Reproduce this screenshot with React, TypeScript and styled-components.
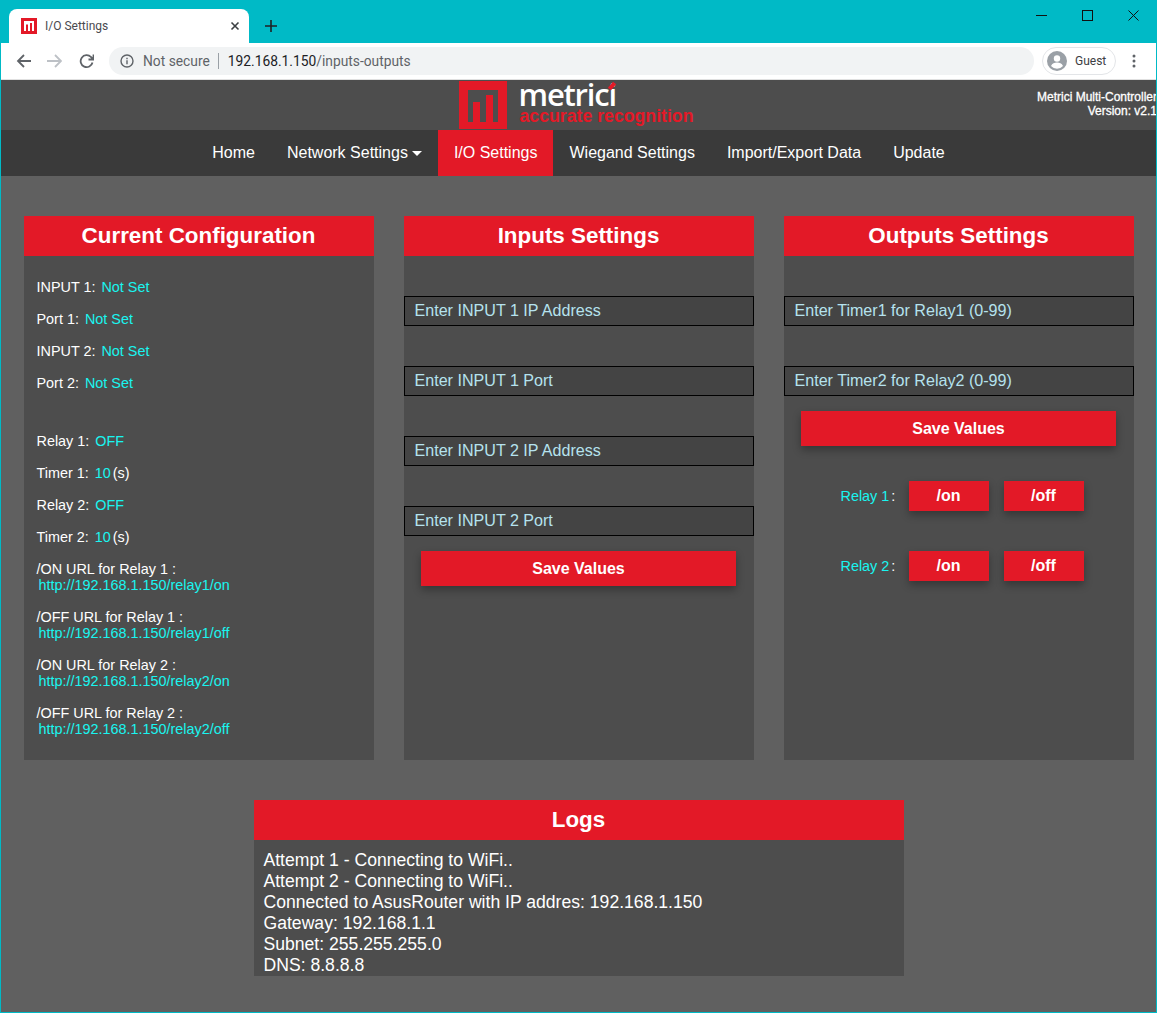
import React from "react";
import styled, { createGlobalStyle } from "styled-components";

const Global = createGlobalStyle`
  html, body { margin: 0; padding: 0; background: #606060; }
  body { font-family: "Liberation Sans", Arial, sans-serif; }
  * { box-sizing: border-box; }
  #root { width: 1157px; height: 1013px; overflow: hidden; }
`;

const Windowed = styled.div`
  width: 1157px; height: 1013px; display: flex; flex-direction: column;
  background: #606060; border: 1px solid #00bac6; border-top: 0; overflow: hidden;
`;
const TabStrip = styled.div`
  height: 43px; flex: none; background: #00bac6; display: flex; align-items: flex-end; margin: 0 -1px; padding-left: 9px;
`;
const Tab = styled.div`
  width: 240px; height: 34px; background: #fff; border-radius: 8px 8px 0 0; display: flex; align-items: center;
  padding: 0 9px 0 12px; gap: 8px; color: #4a4a4f; font: 12px "Roboto", "Noto Sans", sans-serif;
`;
const TabTitle = styled.span` flex: 1; `;
const NewTab = styled.div` width: 44px; height: 34px; display: flex; align-items: center; justify-content: center; `;
const WindowControls = styled.div` margin-left: auto; margin-right: 1px; align-self: flex-start; display: flex; `;
const WinBtn = styled.div` width: 46px; height: 30px; display: flex; align-items: center; justify-content: center; `;
const Toolbar = styled.div`
  height: 37px; flex: none; background: #fff; display: flex; align-items: center; padding: 0 13px 0 14px; border-bottom: 1px solid #e0e0e0;
`;
const NavIcons = styled.div` display: flex; width: 94px; align-items: center; `;
const NavIcon = styled.div` width: 32px; height: 24px; display: flex; align-items: center; `;
const Omnibox = styled.div`
  width: 925px; height: 28px; background: #f1f3f4; border-radius: 14px; display: flex; align-items: center; padding-left: 11px;
  font: 13.8px "Roboto", "Noto Sans", sans-serif; color: #5f6368;
`;
const NotSecure = styled.span` margin-left: 9px; padding-right: 8px; border-right: 1px solid #9aa0a6; line-height: 16px; `;
const Host = styled.span` margin-left: 9px; color: #202124; `;
const HostPath = styled.span` color: #5f6368; `;
const GuestChip = styled.div`
  margin-left: 8px; width: 74px; height: 28px; border: 1px solid #e3e5e8; border-radius: 14px; display: flex; align-items: center; gap: 8px;
  padding-left: 4px; font: 12px "Roboto", "Noto Sans", sans-serif; color: #3c4043;
`;
const Kebab = styled.div` margin-left: 16px; display: flex; `;

const Header = styled.header`
  height: 50px; flex: none; background: #4d4d4d; display: grid; grid-template-columns: 1fr 238px 1fr; color: #fff;
`;
const Logo = styled.div` grid-column: 2; display: flex; gap: 12px; align-items: center; margin-left: -1px; `;
const LogoWords = styled.div` display: flex; flex-direction: column; white-space: nowrap; margin-top: -4px; `;
const LogoName = styled.span`
  font: 600 31px/25px "Open Sans", sans-serif; color: #fff; letter-spacing: -1.2px; height: 25px;
`;
const Accent = styled.span`
  position: relative; display: inline-block;
  &::after { content: ""; position: absolute; left: 0px; top: 2px; width: 8px; height: 4px; background: #e31927; transform: rotate(-50deg); }
`;
const LogoTag = styled.span` font: bold 17.7px/18px "Liberation Sans", sans-serif; color: #e31927; margin-left: 1px; `;
const Version = styled.div`
  grid-column: 3; text-align: right; white-space: nowrap; font: 12px/14px "Liberation Sans", sans-serif; padding-top: 10px; margin-right: -1px;
  -webkit-text-stroke: 0.3px #fff;
`;
const Nav = styled.nav`
  height: 46px; flex: none; background: #3a3a3a; display: flex; justify-content: center;
`;
const NavItem = styled.a<{ $active?: boolean }>`
  padding: 0 16px; display: flex; align-items: center; gap: 4px; color: #fff; font-size: 16px; background: ${p => (p.$active ? "#e31927" : "transparent")};
`;
const Caret = styled.i` width: 0; height: 0; border-left: 5px solid transparent; border-right: 5px solid transparent; border-top: 5px solid #fff; `;

const Content = styled.main` flex: 1; display: flex; flex-direction: column; align-items: center; padding: 40px 0 0; `;
const Columns = styled.div` display: grid; grid-template-columns: repeat(3, 350px); gap: 30px; `;
const Panel = styled.section` height: 544px; background: #4d4d4d; display: flex; flex-direction: column; `;
const PanelTitle = styled.h2`
  margin: 0; height: 40px; flex: none; background: #e31927; color: #fff; text-align: center; font: bold 22.4px/40px "Liberation Sans", sans-serif;
`;
const ConfigBody = styled.div` padding: 15px 13px 0; font-size: 14.4px; color: #fff; `;
const ConfigRow = styled.div<{ $gapAfter?: number }>`
  height: 32px; display: flex; align-items: center; margin-bottom: ${p => p.$gapAfter ?? 0}px;
`;
const Val = styled.span` color: #19f5f0; margin-left: 6px; `;
const Unit = styled.span` margin-left: 2px; `;
const UrlRow = styled.div` height: 48px; padding-top: 8px; line-height: 16px; `;
const UrlLink = styled.div` color: #19f5f0; padding-left: 2px; `;
const FieldStack = styled.form` display: flex; flex-direction: column; padding-top: 40px; `;
const Field = styled.input`
  display: block; width: 100%; height: 30px; margin-bottom: 40px; padding: 0 10px 2px; background: #444; border: 1px solid #000; color: #fff; font: 16.1px "Liberation Sans", sans-serif; outline: 0;
  &::placeholder { color: #b5e2ee; opacity: 1; }
`;
const SaveButton = styled.button`
  display: block; width: 315px; height: 35px; margin: -25px auto 0; background: #e31927; border: 0; color: #fff; font: bold 16px "Liberation Sans", sans-serif;
  box-shadow: 0 4px 8px rgba(0,0,0,.3);
`;
const RelayRow = styled.div` display: flex; align-items: center; height: 30px; padding-left: 56px; `;
const RelayStack = styled.div` display: flex; flex-direction: column; gap: 40px; padding-top: 35px; `;
const RelayLabel = styled.span` width: 69px; padding-left: 1px; font-size: 14.4px; color: #19f5f0; white-space: nowrap; b { font-weight: 400; color: #fff; margin-left: 2px; } `;
const RelayButton = styled.button`
  width: 80px; height: 30px; margin-right: 15px; background: #e31927; border: 0; color: #fff; font: bold 16px "Liberation Sans", sans-serif; box-shadow: 0 4px 8px rgba(0,0,0,.3);
`;
const LogsPanel = styled.section` width: 650px; height: 176px; margin-top: 40px; background: #4d4d4d; overflow: hidden; `;
const LogLines = styled.div` padding: 10px; color: #fff; font-size: 17.6px; line-height: 21px; `;

const Favicon = () => (
  <svg width="16" height="16" viewBox="0 0 16 16"><rect width="16" height="16" fill="#e31927" /><rect x="3" y="3" width="10" height="10" fill="#fff" /><rect x="5" y="6.500" width="2" height="6.500" fill="#e31927" /><rect x="9" y="5" width="2" height="8" fill="#e31927" /></svg>
);

const LogoMark = () => (
  <svg width="48" height="48" viewBox="0 0 48 48" style={{ flex: "none" }}>
    <path fill="#e31927" fillRule="evenodd" d="M0 0H48V48H0ZM9 9V41H39V9Z" />
    <rect x="14" y="21" width="7" height="20" fill="#e31927" />
    <rect x="27" y="14" width="7" height="27" fill="#e31927" />
  </svg>
);

const inputs = ["Enter INPUT 1 IP Address", "Enter INPUT 1 Port", "Enter INPUT 2 IP Address", "Enter INPUT 2 Port"];
const urls = [
  ["/ON URL for Relay 1 :", "http://192.168.1.150/relay1/on"],
  ["/OFF URL for Relay 1 :", "http://192.168.1.150/relay1/off"],
  ["/ON URL for Relay 2 :", "http://192.168.1.150/relay2/on"],
  ["/OFF URL for Relay 2 :", "http://192.168.1.150/relay2/off"],
];
const logs = ["Attempt 1 - Connecting to WiFi..", "Attempt 2 - Connecting to WiFi..", "Connected to AsusRouter with IP addres: 192.168.1.150", "Gateway: 192.168.1.1", "Subnet: 255.255.255.0", "DNS: 8.8.8.8"];

export default function App() {
  return (
    <Windowed>
      <Global />
      <TabStrip>
        <Tab>
          <Favicon />
          <TabTitle>I/O Settings</TabTitle>
          <svg width="10" height="10" viewBox="0 0 10 10"><path d="M1.500 1.500L8.500 8.500M8.500 1.500L1.500 8.500" stroke="#3c4043" strokeWidth="1.600" /></svg>
        </Tab>
        <NewTab>
          <svg width="12" height="12" viewBox="0 0 12 12"><path d="M6 0V12M0 6H12" stroke="#202124" strokeWidth="1.600" /></svg>
        </NewTab>
        <WindowControls>
          <WinBtn><svg width="11" height="11" viewBox="0 0 11 11"><path d="M0 5.500H11" stroke="#111" /></svg></WinBtn>
          <WinBtn><svg width="11" height="11" viewBox="0 0 11 11"><rect x=".5" y=".5" width="10" height="10" fill="none" stroke="#111" /></svg></WinBtn>
          <WinBtn><svg width="11" height="11" viewBox="0 0 11 11"><path d="M.5 .5L10.500 10.500M10.500 .5L.5 10.500" stroke="#111" /></svg></WinBtn>
        </WindowControls>
      </TabStrip>
      <Toolbar>
        <NavIcons>
          <NavIcon><svg width="16" height="16" viewBox="0 0 16 16"><path d="M16 8H3M9 2L3 8L9 14" fill="none" stroke="#5f6368" strokeWidth="1.800" /></svg></NavIcon>
          <NavIcon><svg width="16" height="16" viewBox="0 0 16 16"><path d="M1 8H15M9 2L15 8L9 14" fill="none" stroke="#bdc1c6" strokeWidth="1.800" /></svg></NavIcon>
          <NavIcon><svg width="16" height="16" viewBox="0 0 16 16"><path d="M14.500 9.500A6 6 0 1 1 13 4L15 6M15.500 1.500V6.500H10.500" fill="none" stroke="#5f6368" strokeWidth="1.800" /></svg></NavIcon>
        </NavIcons>
        <Omnibox>
          <svg width="14" height="14" viewBox="0 0 14 14"><circle cx="7" cy="7" r="6" fill="none" stroke="#5f6368" strokeWidth="1.400" /><path d="M7 6.200V10.200M7 3.800V5.200" stroke="#5f6368" strokeWidth="1.400" /></svg>
          <NotSecure>Not secure</NotSecure>
          <Host>192.168.1.150<HostPath>/inputs-outputs</HostPath></Host>
        </Omnibox>
        <GuestChip>
          <svg width="20" height="20" viewBox="0 0 20 20"><circle cx="10" cy="10" r="10" fill="#9aa0a6" /><circle cx="10" cy="7.500" r="3.200" fill="#fff" /><path d="M4 15c1.200-2.600 3.400-3.400 6-3.400s4.800.8 6 3.400A8 8 0 0 1 4 15Z" fill="#fff" /></svg>
          Guest
        </GuestChip>
        <Kebab>
          <svg width="4" height="14" viewBox="0 0 4 14"><circle cx="2" cy="2" r="1.500" fill="#5f6368" /><circle cx="2" cy="7" r="1.500" fill="#5f6368" /><circle cx="2" cy="12" r="1.500" fill="#5f6368" /></svg>
        </Kebab>
      </Toolbar>
      <Header>
        <Logo>
          <LogoMark />
          <LogoWords>
            <LogoName>metric<Accent>i</Accent></LogoName>
            <LogoTag>accurate recognition</LogoTag>
          </LogoWords>
        </Logo>
        <Version>Metrici Multi-Controller<br />Version: v2.1</Version>
      </Header>
      <Nav>
        <NavItem>Home</NavItem>
        <NavItem>Network Settings <Caret /></NavItem>
        <NavItem $active>I/O Settings</NavItem>
        <NavItem>Wiegand Settings</NavItem>
        <NavItem>Import/Export Data</NavItem>
        <NavItem>Update</NavItem>
      </Nav>
      <Content>
        <Columns>
          <Panel>
            <PanelTitle>Current Configuration</PanelTitle>
            <ConfigBody>
              <ConfigRow>INPUT 1: <Val>Not Set</Val></ConfigRow>
              <ConfigRow>Port 1: <Val>Not Set</Val></ConfigRow>
              <ConfigRow>INPUT 2: <Val>Not Set</Val></ConfigRow>
              <ConfigRow $gapAfter={26}>Port 2: <Val>Not Set</Val></ConfigRow>
              <ConfigRow>Relay 1: <Val>OFF</Val></ConfigRow>
              <ConfigRow>Timer 1: <Val>10</Val><Unit>(s)</Unit></ConfigRow>
              <ConfigRow>Relay 2: <Val>OFF</Val></ConfigRow>
              <ConfigRow>Timer 2: <Val>10</Val><Unit>(s)</Unit></ConfigRow>
              {urls.map(([l, u]) => (
                <UrlRow key={u}>{l}<UrlLink>{u}</UrlLink></UrlRow>
              ))}
            </ConfigBody>
          </Panel>
          <Panel>
            <PanelTitle>Inputs Settings</PanelTitle>
            <FieldStack>
              {inputs.map(p => <Field key={p} placeholder={p} />)}
              <SaveButton type="button">Save Values</SaveButton>
            </FieldStack>
          </Panel>
          <Panel>
            <PanelTitle>Outputs Settings</PanelTitle>
            <FieldStack>
              <Field placeholder="Enter Timer1 for Relay1 (0-99)" />
              <Field placeholder="Enter Timer2 for Relay2 (0-99)" />
              <SaveButton type="button">Save Values</SaveButton>
            </FieldStack>
            <RelayStack>
              {[1, 2].map(n => (
                <RelayRow key={n}>
                  <RelayLabel>Relay {n}<b>:</b></RelayLabel>
                  <RelayButton type="button">/on</RelayButton>
                  <RelayButton type="button">/off</RelayButton>
                </RelayRow>
              ))}
            </RelayStack>
          </Panel>
        </Columns>
        <LogsPanel>
          <PanelTitle>Logs</PanelTitle>
          <LogLines>{logs.map(l => <div key={l}>{l}</div>)}</LogLines>
        </LogsPanel>
      </Content>
    </Windowed>
  );
}
